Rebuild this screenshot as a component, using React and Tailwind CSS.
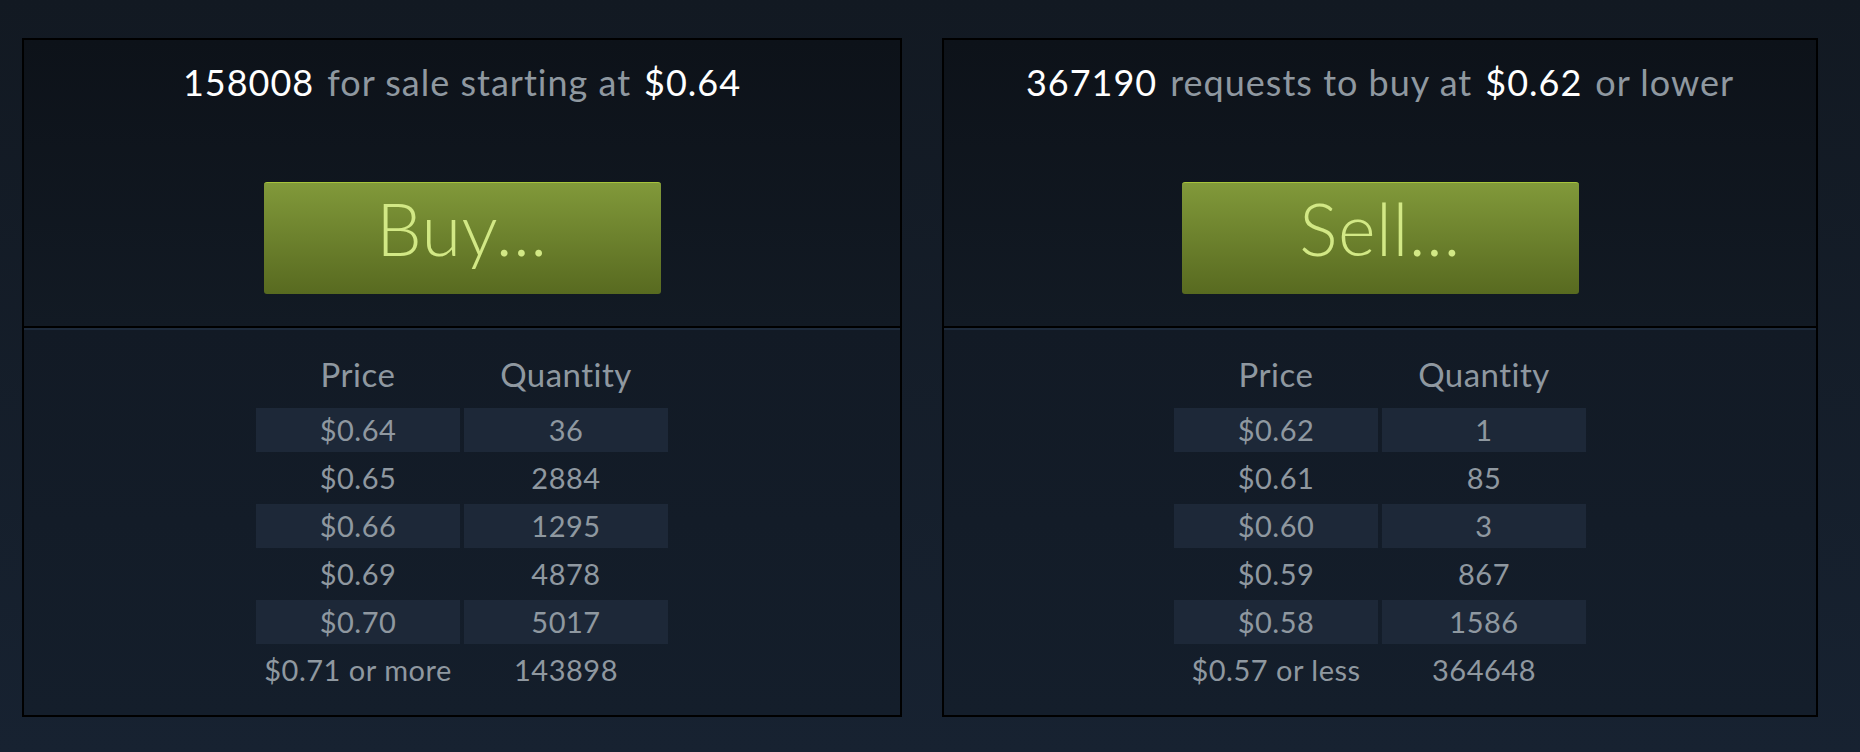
import React from "react";

const sellRows = [
  ["$0.64", "36"],
  ["$0.65", "2884"],
  ["$0.66", "1295"],
  ["$0.69", "4878"],
  ["$0.70", "5017"],
  ["$0.71 or more", "143898"],
];

const buyRows = [
  ["$0.62", "1"],
  ["$0.61", "85"],
  ["$0.60", "3"],
  ["$0.59", "867"],
  ["$0.58", "1586"],
  ["$0.57 or less", "364648"],
];

const OrderTable = ({ rows }) => {
  return (
    <div className="grid grid-cols-[204px_204px] gap-[4px] justify-center">
      <div className="h-[44px] pb-[14px] flex items-center justify-center text-[33px] tracking-[0.5px] text-[#8f98a0]">
        Price
      </div>
      <div className="h-[44px] pb-[14px] flex items-center justify-center text-[33px] tracking-[0.5px] text-[#8f98a0]">
        Quantity
      </div>
      {rows.map(([price, qty], i) => (
        <React.Fragment key={price}>
          <div
            className={`h-[44px] flex items-center justify-center text-[29px] tracking-[0.5px] text-[#8f98a0] ${
              i % 2 === 0 ? "bg-[#1d2838]" : ""
            }`}
          >
            {price}
          </div>
          <div
            className={`h-[44px] flex items-center justify-center text-[29px] tracking-[0.5px] text-[#8f98a0] ${
              i % 2 === 0 ? "bg-[#1d2838]" : ""
            }`}
          >
            {qty}
          </div>
        </React.Fragment>
      ))}
    </div>
  );
};

const OrderBlock = ({ heading, button, rows }) => {
  return (
    <div className="border-2 border-black flex flex-col">
      <div className="h-[286px] flex flex-col items-center pt-[22px] bg-linear-to-b from-[#0d1219] to-[#121a24]">
        <div className="h-[40px] flex items-center justify-center gap-[13px] text-[36px] tracking-[1px]">
          {heading}
        </div>
        <button className="mt-[80px] w-[397px] h-[112px] rounded-[3px] border-t border-[#a6c33c] bg-linear-to-b from-[#81993a] to-[#586a20] text-[#d2e885] text-[72px] font-light leading-none pb-[21px] tracking-[0.5px]">
          {button}
        </button>
      </div>
      <div className="h-[2px] bg-black" />
      <div className="h-[2px] bg-[#1d2a3b]" />
      <div className="flex-1 pt-[30px] pb-[23px] bg-linear-to-b from-[#121a25] to-[#141e2b]">
        <OrderTable rows={rows} />
      </div>
    </div>
  );
};

const App = () => {
  return (
    <div
      className="w-[1860px] h-[752px] pt-[38px] pl-[22px] bg-linear-to-b from-[#121922] to-[#172231]"
      style={{ fontFamily: "Lato, 'Open Sans', sans-serif" }}
    >
      <div className="grid grid-cols-[880px_876px] gap-[40px]">
        <OrderBlock
          heading={
            <>
              <span className="text-white">158008</span>
              <span className="text-[#8f98a0]">for sale starting at</span>
              <span className="text-white">$0.64</span>
            </>
          }
          button="Buy..."
          rows={sellRows}
        />
        <OrderBlock
          heading={
            <>
              <span className="text-white">367190</span>
              <span className="text-[#8f98a0]">requests to buy at</span>
              <span className="text-white">$0.62</span>
              <span className="text-[#8f98a0]">or lower</span>
            </>
          }
          button="Sell..."
          rows={buyRows}
        />
      </div>
    </div>
  );
};

export default App;
